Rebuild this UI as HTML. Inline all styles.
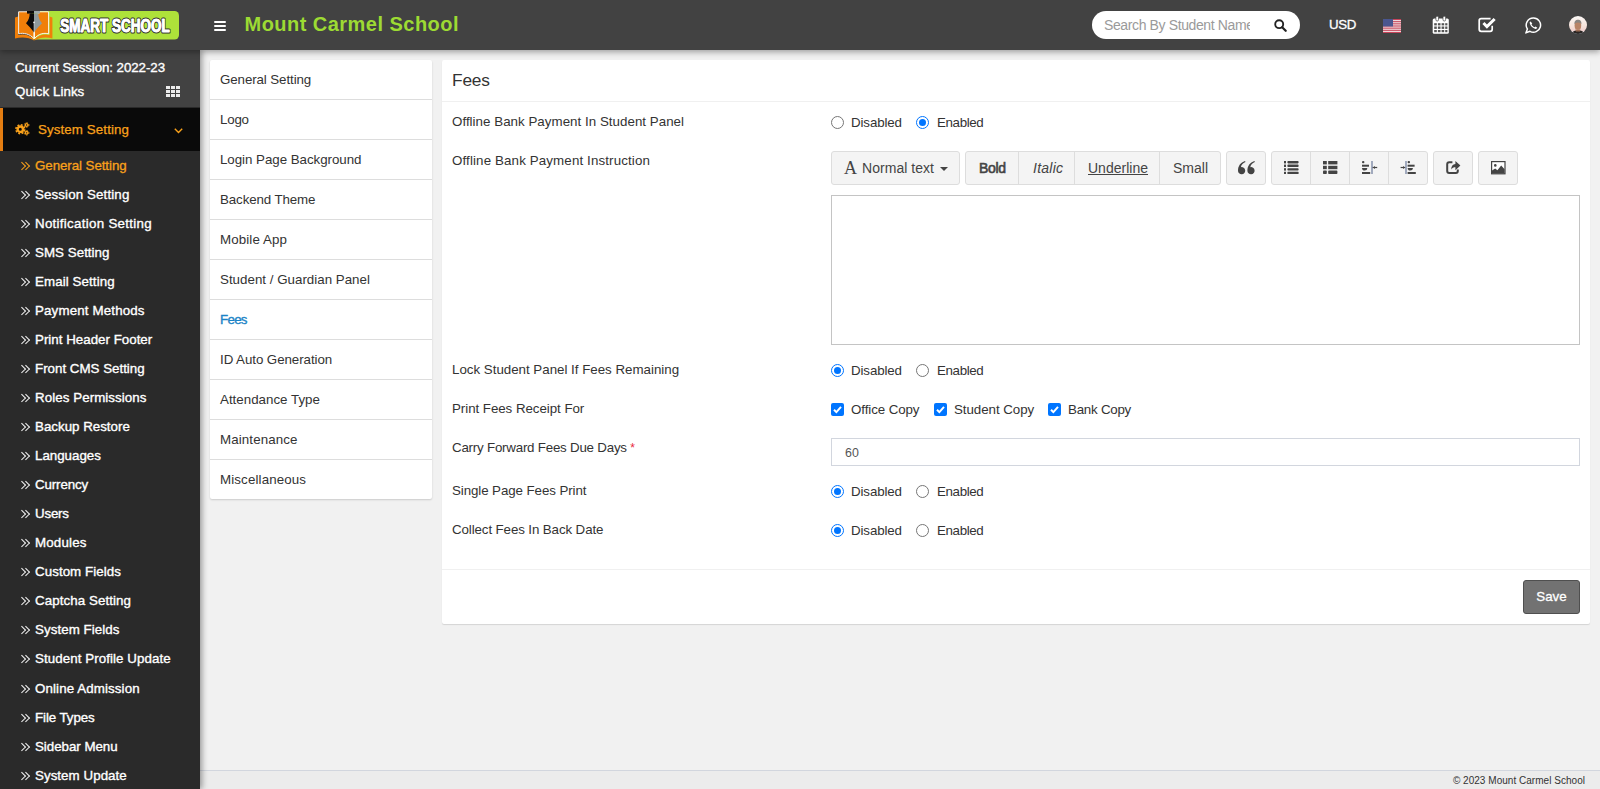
<!DOCTYPE html>
<html lang="en"><head>
<meta charset="utf-8">
<title>Mount Carmel School - Fees</title>
<style>
*,*::before,*::after{box-sizing:border-box;margin:0;padding:0}
html,body{width:1600px;height:789px;overflow:hidden}
body{font-family:"Liberation Sans",sans-serif;font-size:13.33px;color:#333;background:#f1f1f1;position:relative}
a{text-decoration:none;color:inherit}
ul{list-style:none}
/* header */
.hdr{position:absolute;left:0;top:0;width:1600px;height:50px;background:#424242;z-index:30;box-shadow:0 2px 6px rgba(0,0,0,.35)}
.logo{position:absolute;left:15px;top:11px}
.ham{position:absolute;left:214px;top:21px;width:12px;height:11px}
.ham i{display:block;height:2px;background:#fff;margin-bottom:2px;border-radius:1px}
.title{position:absolute;left:244.5px;top:11px;font-size:20px;font-weight:700;color:#9ddb33;white-space:nowrap;line-height:26px}
.search{position:absolute;left:1092px;top:11px;width:208px;height:28px;background:#fff;border-radius:14px}
.search span{position:absolute;left:12px;top:6px;width:146px;overflow:hidden;white-space:nowrap;font-size:14px;color:#9a9a9a;line-height:17px}
.search b{font-weight:400}
.search svg{position:absolute;left:182px;top:8px}
.usd{position:absolute;left:1329px;top:16px;color:#fff;font-size:13.33px;-webkit-text-stroke:.3px #fff;line-height:18px}
.hico{position:absolute}
/* sidebar */
.side{position:absolute;left:0;top:50px;width:200px;height:739px;background:#2a2a2a;z-index:20;box-shadow:2px 0 6px rgba(0,0,0,.38)}
.sess{position:absolute;left:0;top:0;width:200px;height:57px;background:#424242;color:#fff;font-weight:400;-webkit-text-stroke:.35px #fff;font-size:13.33px}
.sess div{position:absolute;left:15px;margin-top:1px;white-space:nowrap;line-height:18px}
.sys{position:absolute;left:0;top:58px;width:200px;height:43px;background:#0a0a0a;border-left:3px solid #e37d12;color:#f9a11b}
.sys span{position:absolute;left:35px;top:13px;font-size:13.33px;-webkit-text-stroke:.25px #f9a11b;line-height:18px;white-space:nowrap}
.sub li{position:absolute;left:35px;margin-top:1px;color:#fff;font-weight:400;-webkit-text-stroke:.35px #fff;font-size:13.33px;white-space:nowrap;line-height:18px}
.sub li.act{color:#f9a11b;-webkit-text-stroke:.3px #f9a11b}
.sub li::before,.sub li::after{content:"";position:absolute;top:6.3px;width:5.6px;height:5.6px;border-top:1.9px solid #f2f2f2;border-right:1.9px solid #f2f2f2;transform:rotate(45deg)}
.sub li::before{left:-15.9px}
.sub li::after{left:-12.4px}
.sub li.act::before,.sub li.act::after{border-color:#f9a11b}
/* tabs */
.tabs{position:absolute;left:210px;top:60px;width:222px;height:439px;background:#fff;border-radius:2px;box-shadow:0 1px 2px rgba(0,0,0,.16)}
.tabs li{height:40px;border-bottom:1px solid #ddd;padding:10px 0 0 10px;font-size:13.33px;color:#333;line-height:19px;white-space:nowrap}
.tabs li:last-child{border-bottom:0}
.tabs li.on{color:#1b83c6;-webkit-text-stroke:.35px #1b83c6}
/* panel */
.panel{position:absolute;left:442px;top:60px;width:1148px;height:564px;background:#fff;border-radius:2px;box-shadow:0 1px 1px rgba(0,0,0,.12)}
.panel h3{position:absolute;left:10px;top:8px;font-size:17.33px;font-weight:400;color:#333;line-height:24px}
.hr1{position:absolute;left:0;top:41px;width:100%;height:1px;background:#f0f0f0}
.hr2{position:absolute;left:0;top:509px;width:100%;height:1px;background:#f0f0f0}
.lbl{position:absolute;left:10px;margin-top:1px;font-size:13.33px;color:#333;white-space:nowrap;line-height:18px}
.lbl b{color:#e8283c;font-weight:400;font-size:12px;margin-left:3.5px}
.opt{position:absolute;margin-top:1px;font-size:13.33px;color:#333;white-space:nowrap;line-height:18px}
.rad{position:absolute;width:13px;height:13px;border-radius:50%;border:1px solid #767676;background:#fff}
.rad.on{border:1px solid #0075ff}
.rad.on:after{content:"";position:absolute;left:2px;top:2px;width:7px;height:7px;border-radius:50%;background:#0075ff}
.chk{position:absolute;width:13px;height:13px;border-radius:2px;background:#0075ff}
.chk svg{position:absolute;left:0;top:0}
.tb{position:absolute;top:91px;height:34px;background:#f4f4f4;border:1px solid #ddd;border-radius:3px;color:#444;font-size:14px}
.tb span{position:absolute;top:8px;white-space:nowrap;line-height:17px}
.tb em{position:absolute;top:0;width:1px;height:32px;background:#ddd}
.tb .fa{font-family:"Liberation Serif",serif;font-size:18px;top:6px;line-height:20px}
.caret{position:absolute;left:108px;top:15px;width:0;height:0;border-left:4px solid transparent;border-right:4px solid transparent;border-top:4px solid #444}
.ta{position:absolute;left:389px;top:135px;width:749px;height:150px;border:1px solid #c4c4c4;background:#fff}
.inp{position:absolute;left:389px;top:378px;width:749px;height:28px;border:1px solid #d2d6de;background:#fff}
.inp span{position:absolute;left:13px;top:6px;font-size:12.4px;color:#555;line-height:16px}
.save{position:absolute;left:1081px;top:520px;width:57px;height:34px;background:#727272;border:1px solid #4f4f4f;border-radius:3px;color:#fff;font-size:13.33px;-webkit-text-stroke:.3px #fff;text-align:center;line-height:32px}
/* footer */
.ftr{position:absolute;left:200px;top:770px;width:1400px;height:19px;background:#ececec;border-top:1px solid #d2d6de;font-size:10px;color:#333;text-align:right;padding-right:15px;line-height:19px}
</style>
</head>
<body>
<div class="hdr">
  <svg class="logo" width="164" height="30" viewBox="0 0 164 30">
    <rect x="16" y="0" width="148" height="28.6" rx="4.5" fill="#aee23a"></rect>
    <path d="M0,6.4 L3.2,5.4 L3.2,24 C9,22.4 15,24 19.1,28.4 L19.1,29.4 C14,26.2 6,25.6 0,27.6 Z" fill="#f07f09"></path>
    <path d="M37.4,6.4 L34.6,5.4 L34.6,24 C29,22.4 23.5,24 19.5,28.4 L19.5,29.4 C24.5,26.2 32,25.6 37.4,27.6 Z" fill="#f07f09"></path>
    <path d="M3.6,0.8 L14,0.8 L18.9,9 L18.9,27.6 C14.5,22.6 8.5,21.6 3.6,22.8 Z" fill="#f07f09" stroke="#fff" stroke-width=".9"></path>
    <path d="M33.6,0.8 L24,0.8 L19.5,9 L19.5,27.6 C23.5,22.6 29,21.6 33.6,22.8 Z" fill="#f07f09" stroke="#fff" stroke-width=".9"></path>
    <path d="M12,0 H19 V2.6 H12 Z" fill="#0b0b0b"></path>
    <path d="M19,0 H25 V2.6 H19 Z" fill="#9ea9ab"></path>
    <path d="M14.6,2.6 H19 V21.6 C16,17 13,14.5 11,12.2 C13.6,9.5 14.8,6 14.6,2.6 Z" fill="#0b0b0b"></path>
    <path d="M23.4,2.6 H19 V21.6 C22,17 25,14.5 27,12.2 C24.4,9.5 23.2,6 23.4,2.6 Z" fill="#8f9a9d"></path>
    <circle cx="19" cy="11.4" r=".8" fill="#fff"></circle>
    <path d="M19,12 V21" stroke="#e8e8e8" stroke-width=".5"></path>
    <text x="45.2" y="21.4" font-family="Liberation Sans, sans-serif" font-weight="700" font-size="17.8" textLength="109.5" lengthAdjust="spacingAndGlyphs" fill="#fff" stroke="#303030" stroke-width="3" stroke-linejoin="round" paint-order="stroke">SMART SCHOOL</text>
    <g fill="#fff" stroke="#fff" stroke-width=".9" stroke-linejoin="round" font-family="Liberation Sans, sans-serif" font-weight="700" font-size="17.8"><text x="45.2" y="21.4" textLength="109.5" lengthAdjust="spacingAndGlyphs">SMART SCHOOL</text></g>
  </svg>
  <div class="ham"><i></i><i></i><i></i></div>
  <div class="title" style="letter-spacing: 0.47px;">Mount Carmel School</div>
  <div class="search"><span><b style="letter-spacing: -0.38px;">Search By Student Name</b></span>
    <svg width="13" height="13" viewBox="0 0 14 14"><circle cx="5.6" cy="5.6" r="4.3" fill="none" stroke="#222" stroke-width="2"></circle><path d="M8.8 8.8L12.6 12.6" stroke="#222" stroke-width="2.4" stroke-linecap="round"></path></svg>
  </div>

  <svg class="hico" style="left:1383px;top:19px" width="18" height="14" viewBox="0 0 18 14">
    <rect width="18" height="14" fill="#f2e4e6"></rect>
    <g fill="#c7455a"><rect y="0" width="18" height="1.08"></rect><rect y="2.15" width="18" height="1.08"></rect><rect y="4.3" width="18" height="1.08"></rect><rect y="6.46" width="18" height="1.08"></rect><rect y="8.6" width="18" height="1.08"></rect><rect y="10.77" width="18" height="1.08"></rect><rect y="12.92" width="18" height="1.08"></rect></g>
    <rect width="10" height="7.5" fill="#4a568f"></rect>
  </svg>
  <svg class="hico" style="left:1432px;top:16px" width="18" height="18" viewBox="0 0 18 18">
    <path d="M2.2,2.6 H15.3 Q16.8,2.6 16.8,4.1 V16.2 Q16.8,17.7 15.3,17.7 H2.2 Q0.7,17.7 0.7,16.2 V4.1 Q0.7,2.6 2.2,2.6 Z" fill="#fff"></path>
    <rect x="3.9" y="0.2" width="2.6" height="4.8" rx="1.2" fill="#fff" stroke="#424242" stroke-width=".7"></rect>
    <rect x="11" y="0.2" width="2.6" height="4.8" rx="1.2" fill="#fff" stroke="#424242" stroke-width=".7"></rect>
    <g fill="#555">
      <rect x="2.2" y="7.2" width="2.6" height="2.2"></rect><rect x="5.9" y="7.2" width="2.6" height="2.2"></rect><rect x="9.6" y="7.2" width="2.6" height="2.2"></rect><rect x="13.2" y="7.2" width="2.2" height="2.2"></rect>
      <rect x="2.2" y="10.5" width="2.6" height="2.4"></rect><rect x="5.9" y="10.5" width="2.6" height="2.4"></rect><rect x="9.6" y="10.5" width="2.6" height="2.4"></rect><rect x="13.2" y="10.5" width="2.2" height="2.4"></rect>
      <rect x="2.2" y="14" width="2.6" height="2.2"></rect><rect x="5.9" y="14" width="2.6" height="2.2"></rect><rect x="9.6" y="14" width="2.6" height="2.2"></rect><rect x="13.2" y="14" width="2.2" height="2.2"></rect>
    </g>
  </svg>
  <svg class="hico" style="left:1478px;top:17px" width="19" height="16" viewBox="0 0 19 16">
    <path d="M14.2,8.8 V12.3 Q14.2,14.3 12.2,14.3 H3.2 Q1.2,14.3 1.2,12.3 V3.6 Q1.2,1.6 3.2,1.6 H12.6" fill="none" stroke="#fff" stroke-width="1.7"></path>
    <path d="M4.4,6.9 L6.5,4.9 L8.9,7.4 L15.6,0.9 L17.7,3 L8.9,11.7 Z" fill="#fff"></path>
  </svg>
  <svg class="hico" style="left:1525px;top:17px" width="17" height="17" viewBox="0 0 17 17">
    <path d="M8.6,1 A7.1,7.1 0 1 1 5,14.3 L0.9,15.9 L2.4,12 A7.1,7.1 0 0 1 8.6,1 Z" fill="none" stroke="#fff" stroke-width="1.5" stroke-linejoin="round"></path>
    <path d="M5.6,4.4 C5,4.6 4.6,5.3 4.7,6.1 C5.2,8.9 7.6,11.4 10.4,11.9 C11.3,12 12,11.5 12.3,10.8 L10.5,9.5 L9.5,10.3 C8.2,9.8 7,8.6 6.5,7.3 L7.3,6.4 Z" fill="#fff"></path>
  </svg>
  <svg class="hico" style="left:1569px;top:16px" width="18" height="18" viewBox="0 0 18 18">
    <defs><clipPath id="av"><circle cx="9" cy="9" r="9"></circle></clipPath>
    <linearGradient id="avg" x1="0" y1="0" x2="0" y2="1"><stop offset="0" stop-color="#fbf8f6"></stop><stop offset=".55" stop-color="#f7e4dc"></stop><stop offset=".8" stop-color="#f3d3cf"></stop><stop offset="1" stop-color="#b9d3e6"></stop></linearGradient></defs>
    <g clip-path="url(#av)">
      <rect width="18" height="18" fill="url(#avg)"></rect>
      <path d="M2.5,18 C3.5,15.2 6,14.2 9,14.2 C12,14.2 14.5,15.2 15.5,18 Z" fill="#2a2523"></path>
      <ellipse cx="8.9" cy="9.4" rx="3.3" ry="4.5" fill="#b98467"></ellipse>
      <path d="M5.5,8.6 C5.1,5.2 6.8,3.8 9,3.8 C11.2,3.8 12.8,5.2 12.4,8.6 C12,7.2 11.4,6.5 9,6.5 C6.6,6.5 5.9,7.2 5.5,8.6 Z" fill="#8b8682"></path>
      <path d="M6.6,13 C7.6,14.6 10.2,14.6 11.2,13 L11,15.4 L6.9,15.4 Z" fill="#a06f55"></path>
    </g>
  </svg>
  <div class="usd" style="letter-spacing: -0.42px;">USD</div>
</div>

<div class="side">
  <div class="sess">
    <div style="top: 8px; letter-spacing: -0.08px;">Current Session: 2022-23</div>
    <div style="top: 32px; letter-spacing: 0.04px;">Quick Links</div>
    <svg style="position:absolute;left:166.3px;top:36.4px" width="14" height="11" viewBox="0 0 14 11"><g fill="#ececec"><rect x="0" y="0" width="4" height="3"></rect><rect x="5" y="0" width="4" height="3"></rect><rect x="10" y="0" width="4" height="3"></rect><rect x="0" y="4" width="4" height="3"></rect><rect x="5" y="4" width="4" height="3"></rect><rect x="10" y="4" width="4" height="3"></rect><rect x="0" y="8" width="4" height="3"></rect><rect x="5" y="8" width="4" height="3"></rect><rect x="10" y="8" width="4" height="3"></rect></g></svg>
  </div>
  <div class="sys"><svg style="position:absolute;left:12px;top:14px" width="15" height="14" viewBox="0 0 15 14">
      <g fill="none" stroke="#f9a11b">
        <circle cx="5.3" cy="7.2" r="2.7" stroke-width="2.4"></circle>
        <circle cx="5.3" cy="7.2" r="4.4" stroke-width="1.6" stroke-dasharray="1.9 1.55"></circle>
        <circle cx="11.6" cy="3" r="1.3" stroke-width="1.3"></circle>
        <circle cx="11.6" cy="3" r="2.3" stroke-width="1" stroke-dasharray="1.2 1.21"></circle>
        <circle cx="11.6" cy="10.8" r="1.3" stroke-width="1.3"></circle>
        <circle cx="11.6" cy="10.8" r="2.3" stroke-width="1" stroke-dasharray="1.2 1.21"></circle>
      </g></svg>
    <svg style="position:absolute;left:171px;top:20px" width="9" height="6" viewBox="0 0 9 6"><path d="M0.8,0.8 L4.5,4.5 L8.2,0.8" fill="none" stroke="#f9a11b" stroke-width="1.4"></path></svg><span style="letter-spacing: 0.1px;">System Setting</span></div>
  <ul class="sub">
    <li class="act" style="top: 106px; letter-spacing: -0.07px;">General Setting</li>
    <li style="top: 135px; letter-spacing: 0.12px;">Session Setting</li>
    <li style="top: 164px; letter-spacing: 0.29px;">Notification Setting</li>
    <li style="top: 193px; letter-spacing: 0.04px;">SMS Setting</li>
    <li style="top: 222px; letter-spacing: 0.09px;">Email Setting</li>
    <li style="top: 251px; letter-spacing: 0.15px;">Payment Methods</li>
    <li style="top: 280px; letter-spacing: 0.01px;">Print Header Footer</li>
    <li style="top: 309px; letter-spacing: 0px;">Front CMS Setting</li>
    <li style="top: 338px; letter-spacing: 0.07px;">Roles Permissions</li>
    <li style="top: 367px; letter-spacing: 0px;">Backup Restore</li>
    <li style="top: 396px; letter-spacing: -0.01px;">Languages</li>
    <li style="top: 425px; letter-spacing: -0.13px;">Currency</li>
    <li style="top: 454px; letter-spacing: -0.2px;">Users</li>
    <li style="top: 483px; letter-spacing: 0.17px;">Modules</li>
    <li style="top: 512px; letter-spacing: 0.06px;">Custom Fields</li>
    <li style="top: 541px; letter-spacing: 0.08px;">Captcha Setting</li>
    <li style="top: 570px; letter-spacing: 0.06px;">System Fields</li>
    <li style="top: 599px; letter-spacing: 0.07px;">Student Profile Update</li>
    <li style="top: 629px; letter-spacing: 0.11px;">Online Admission</li>
    <li style="top: 658px; letter-spacing: -0.08px;">File Types</li>
    <li style="top: 687px; letter-spacing: -0.03px;">Sidebar Menu</li>
    <li style="top: 716px; letter-spacing: 0.05px;">System Update</li>
  </ul>
</div>

<ul class="tabs">
  <li style="letter-spacing: -0.1px;">General Setting</li>
  <li style="letter-spacing: -0.22px;">Logo</li>
  <li style="letter-spacing: -0.04px;">Login Page Background</li>
  <li style="letter-spacing: -0.11px;">Backend Theme</li>
  <li style="letter-spacing: 0.12px;">Mobile App</li>
  <li style="letter-spacing: 0.01px;">Student / Guardian Panel</li>
  <li class="on" style="letter-spacing: -0.71px;">Fees</li>
  <li style="letter-spacing: -0.07px;">ID Auto Generation</li>
  <li style="letter-spacing: 0.01px;">Attendance Type</li>
  <li style="letter-spacing: 0.12px;">Maintenance</li>
  <li style="letter-spacing: 0.13px;">Miscellaneous</li>
</ul>

<div class="panel">
  <h3 style="letter-spacing: -0.18px;">Fees</h3>
  <div class="hr1"></div>
  <div class="lbl" style="top: 52px; letter-spacing: 0.03px;">Offline Bank Payment In Student Panel</div>
  <div class="lbl" style="top: 91px; letter-spacing: 0.13px;">Offline Bank Payment Instruction</div>
  <div class="lbl" style="top: 300px; letter-spacing: -0.01px;">Lock Student Panel If Fees Remaining</div>
  <div class="lbl" style="top: 339px; letter-spacing: -0.05px;">Print Fees Receipt For</div>
  <div class="lbl" style="top:378px"><span style="letter-spacing: -0.22px;">Carry Forward Fees Due Days</span><b>*</b></div>
  <div class="lbl" style="top: 421px; letter-spacing: -0.09px;">Single Page Fees Print</div>
  <div class="lbl" style="top: 460px; letter-spacing: -0.11px;">Collect Fees In Back Date</div>

  <!-- row1 -->
  <i class="rad" style="left:389px;top:56px"></i><span class="opt" style="left: 409px; top: 53px; letter-spacing: -0.12px;">Disabled</span>
  <i class="rad on" style="left:474px;top:56px"></i><span class="opt" style="left: 495px; top: 53px; letter-spacing: -0.36px;">Enabled</span>
  <!-- row3 -->
  <i class="rad on" style="left:389px;top:304px"></i><span class="opt" style="left: 409px; top: 301px; letter-spacing: -0.12px;">Disabled</span>
  <i class="rad" style="left:474px;top:304px"></i><span class="opt" style="left: 495px; top: 301px; letter-spacing: -0.36px;">Enabled</span>
  <!-- row4 checkboxes -->
  <i class="chk" style="left:389px;top:343px"><svg width="13" height="13" viewBox="0 0 13 13"><path d="M3 6.7L5.4 9.1L10 3.9" fill="none" stroke="#fff" stroke-width="2"></path></svg></i><span class="opt" style="left: 409px; top: 340px; letter-spacing: -0.09px;">Office Copy</span>
  <i class="chk" style="left:492px;top:343px"><svg width="13" height="13" viewBox="0 0 13 13"><path d="M3 6.7L5.4 9.1L10 3.9" fill="none" stroke="#fff" stroke-width="2"></path></svg></i><span class="opt" style="left: 512px; top: 340px; letter-spacing: -0.05px;">Student Copy</span>
  <i class="chk" style="left:606px;top:343px"><svg width="13" height="13" viewBox="0 0 13 13"><path d="M3 6.7L5.4 9.1L10 3.9" fill="none" stroke="#fff" stroke-width="2"></path></svg></i><span class="opt" style="left: 626px; top: 340px; letter-spacing: -0.24px;">Bank Copy</span>
  <!-- row6 -->
  <i class="rad on" style="left:389px;top:425px"></i><span class="opt" style="left: 409px; top: 422px; letter-spacing: -0.12px;">Disabled</span>
  <i class="rad" style="left:474px;top:425px"></i><span class="opt" style="left: 495px; top: 422px; letter-spacing: -0.36px;">Enabled</span>
  <!-- row7 -->
  <i class="rad on" style="left:389px;top:464px"></i><span class="opt" style="left: 409px; top: 461px; letter-spacing: -0.12px;">Disabled</span>
  <i class="rad" style="left:474px;top:464px"></i><span class="opt" style="left: 495px; top: 461px; letter-spacing: -0.36px;">Enabled</span>

  <!-- toolbar -->
  <div class="tb" style="left:389px;width:129px"><span class="fa" style="left:12px">A</span><span style="left: 30px; letter-spacing: 0.04px;">Normal text</span><u class="caret"></u></div>
  <div class="tb" style="left:523px;width:256px">
    <span style="left: 13px; -webkit-text-stroke: 0.6px rgb(68, 68, 68); letter-spacing: -0.34px;">Bold</span><em style="left:52px"></em>
    <span style="left: 67px; font-style: italic; letter-spacing: 0.24px;">Italic</span><em style="left:108px"></em>
    <span style="left: 122px; text-decoration: underline; letter-spacing: 0.01px;">Underline</span><em style="left:193px"></em>
    <span style="left: 207px; letter-spacing: 0px;">Small</span>
  </div>
  <div class="tb" style="left:784px;width:40px"><svg style="position:absolute;left:11px;top:9px" width="18" height="14" viewBox="0 0 18 14"><g fill="#444"><path id="q1" d="M0,9.7 C0,4.8 2.6,1.6 7,0 L7.5,1.1 C4.6,2.5 3.3,4.1 2.9,6.2 A3.6,3.6 0 1 1 0,9.7 Z"></path><path d="M9.4,9.7 C9.4,4.8 12,1.6 16.4,0 L16.9,1.1 C14,2.5 12.7,4.1 12.3,6.2 A3.6,3.6 0 1 1 9.4,9.7 Z"></path></g></svg></div>
  <div class="tb" style="left:829px;width:157px"><svg style="position:absolute;left:12px;top:9px" width="15" height="14" viewBox="0 0 15 14"><g fill="#444"><rect x="0" y="0" width="2" height="2.4"></rect><rect x="3.4" y="0" width="11.2" height="2.4" rx=".8"></rect><rect x="0" y="3.6" width="2" height="2.4"></rect><rect x="3.4" y="3.6" width="11.2" height="2.4" rx=".8"></rect><rect x="0" y="7.2" width="2" height="2.4"></rect><rect x="3.4" y="7.2" width="11.2" height="2.4" rx=".8"></rect><rect x="0" y="10.8" width="2" height="2.2"></rect><rect x="3.4" y="10.8" width="11.2" height="2.2" rx=".6"></rect></g></svg>
    <svg style="position:absolute;left:51px;top:9px" width="15" height="14" viewBox="0 0 15 14"><g fill="#444"><rect x="0" y="0" width="3.8" height="3.4"></rect><rect x="5.2" y="0" width="9.2" height="3.4"></rect><rect x="0" y="4.8" width="3.8" height="3.4"></rect><rect x="5.2" y="4.8" width="9.2" height="3.4"></rect><rect x="0" y="9.6" width="3.8" height="3.4" rx=".8"></rect><rect x="5.2" y="9.6" width="9.2" height="3.4" rx=".8"></rect></g></svg>
    <svg style="position:absolute;left:90px;top:9px" width="16" height="14" viewBox="0 0 16 14"><g fill="#444"><rect x="0" y="0" width="2.4" height="2.2" rx="1"></rect><rect x="0" y="3.7" width="7" height="2"></rect><path d="M0,7 H5.4 Q5.2,9.6 2.7,9.6 Q0.2,9.6 0,7 Z"></path><rect x="0" y="11" width="8.2" height="2"></rect><rect x="9.4" y="0" width="1.2" height="13" fill="#6a7a9a"></rect><rect x="10.6" y="5.9" width="4.6" height="1.2"></rect><path d="M11,6.5 L13,4.9 V8.1 Z"></path></g></svg>
    <svg style="position:absolute;left:128px;top:9px" width="16" height="14" viewBox="0 0 16 14"><g fill="#444"><rect x="7.6" y="0" width="2.4" height="2.2" rx="1"></rect><rect x="7.6" y="3.7" width="7" height="2"></rect><path d="M7.6,7 H13 Q12.8,9.6 10.3,9.6 Q7.8,9.6 7.6,7 Z"></path><rect x="7.6" y="11" width="8.2" height="2"></rect><rect x="5.4" y="0" width="1.2" height="13" fill="#6a7a9a"></rect><rect x="0.6" y="5.9" width="4.6" height="1.2"></rect><path d="M5,6.5 L3,4.9 V8.1 Z"></path></g></svg><em style="left:38px"></em><em style="left:77px"></em><em style="left:116px"></em></div>
  <div class="tb" style="left:991px;width:40px"><svg style="position:absolute;left:12px;top:9px" width="15" height="14" viewBox="0 0 15 14"><path d="M11.8,8.4 V10 Q11.8,12 9.8,12 H3.2 Q1.2,12 1.2,10 V3.2 Q1.2,1.2 3.2,1.2 H6.4" fill="none" stroke="#444" stroke-width="2"></path><path d="M9.4,0 L14.4,4.6 L9.4,9.2 V6.2 C7.6,6.2 6.2,6.8 5.2,8.4 C5.2,5.2 6.8,3.2 9.4,3 Z" fill="#444"></path></svg></div>
  <div class="tb" style="left:1036px;width:40px"><svg style="position:absolute;left:12px;top:9px" width="15" height="14" viewBox="0 0 15 14"><rect x="0.6" y="0.6" width="13.4" height="12.2" fill="#fff" stroke="#444" stroke-width="1.2"></rect><circle cx="4.3" cy="4.4" r="1.3" fill="#444"></circle><path d="M1,12.6 V9.6 L4.2,7.4 L6.4,9.2 L10.2,4.6 L13.6,8.2 V12.6 Z" fill="#444"></path></svg></div>
  <div class="ta"></div>
  <div class="inp"><span>60</span></div>
  <div class="hr2"></div>
  <div class="save"><span style="letter-spacing: 0px;">Save</span></div>
</div>

<div class="ftr"><span style="letter-spacing: 0.03px;">© 2023 Mount Carmel School</span></div>


</body></html>
